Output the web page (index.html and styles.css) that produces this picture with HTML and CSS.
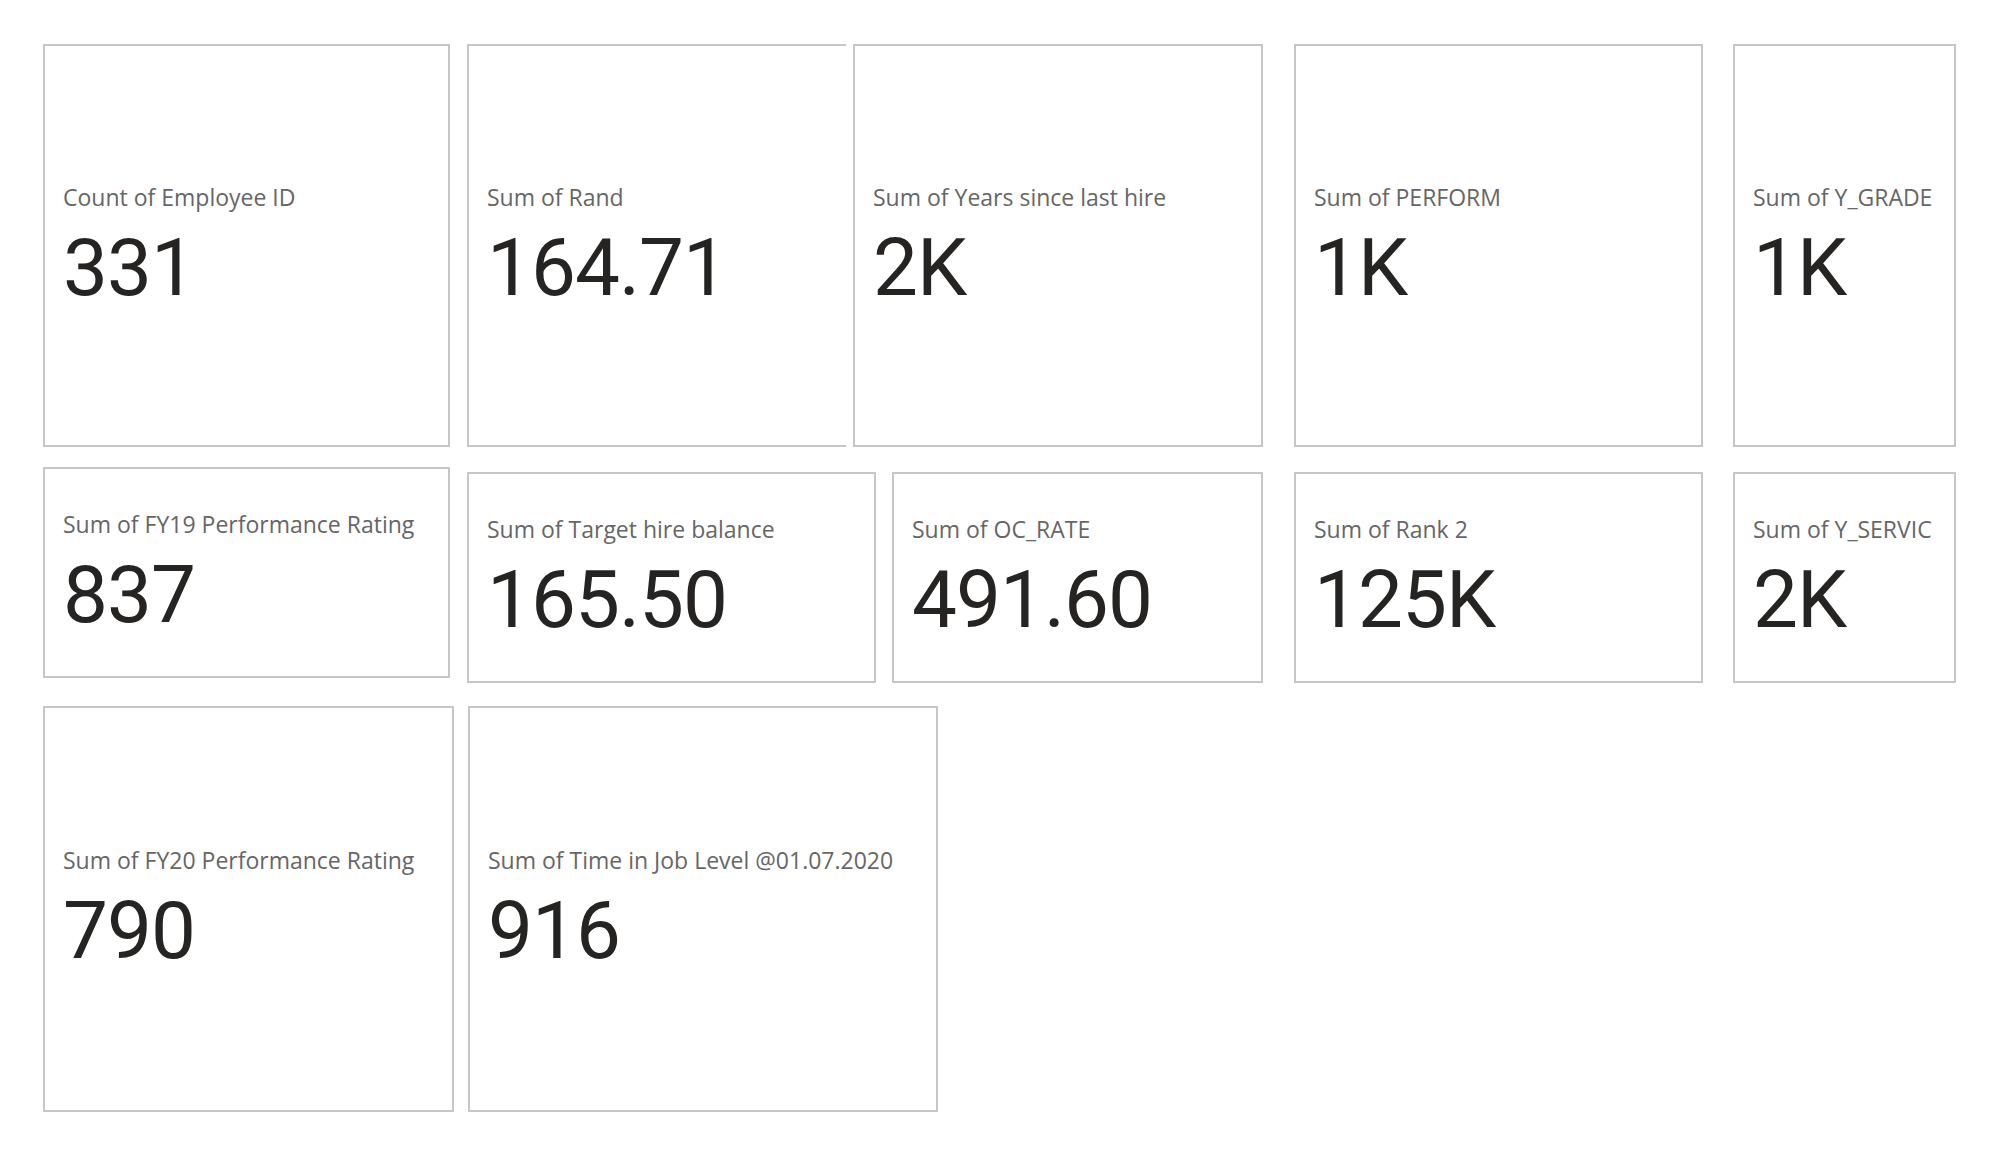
FILE: index.html
```html
<!DOCTYPE html>
<html lang="en">
<head>
<meta charset="utf-8">
<title>Cards</title>
<link rel="stylesheet" href="styles.css">
</head>
<body>
<div class="canvas">
  <div class="row row-1">
    <div class="card c1"><div class="label">Count of Employee ID</div><div class="value">331</div></div>
    <div class="card c2"><div class="label">Sum of Rand</div><div class="value">164.71</div></div>
    <div class="card c3"><div class="label">Sum of Years since last hire</div><div class="value">2K</div></div>
    <div class="card c4"><div class="label">Sum of PERFORM</div><div class="value">1K</div></div>
    <div class="card c5"><div class="label">Sum of Y_GRADE</div><div class="value">1K</div></div>
  </div>
  <div class="row row-2">
    <div class="card c6"><div class="label">Sum of FY19 Performance Rating</div><div class="value">837</div></div>
    <div class="card c7"><div class="label">Sum of Target hire balance</div><div class="value">165.50</div></div>
    <div class="card c8"><div class="label">Sum of OC_RATE</div><div class="value">491.60</div></div>
    <div class="card c9"><div class="label">Sum of Rank 2</div><div class="value">125K</div></div>
    <div class="card c10"><div class="label">Sum of Y_SERVIC</div><div class="value">2K</div></div>
  </div>
  <div class="row row-3">
    <div class="card c11"><div class="label">Sum of FY20 Performance Rating</div><div class="value">790</div></div>
    <div class="card c12"><div class="label">Sum of Time in Job Level @01.07.2020</div><div class="value">916</div></div>
  </div>
</div>
</body>
</html>
```
FILE: styles.css
```css
html, body {
  margin: 0;
  background: #ffffff;
}

.canvas {
  display: flex;
  flex-direction: column;
  padding: 44px 0 0 43px;
}

.row {
  display: flex;
  align-items: flex-start;
}

.row-2 { margin-top: 20px; }
.row-3 { margin-top: 23px; }

.card {
  box-sizing: border-box;
  border: 2px solid #c6c6c6;
  background: #ffffff;
  display: flex;
  flex-direction: column;
  justify-content: center;
  padding-left: 18px;
  overflow: hidden;
}

.label {
  font-family: "Open Sans", "Noto Sans", sans-serif;
  font-size: 23px;
  line-height: 27px;
  color: #666666;
  white-space: nowrap;
}

.value {
  font-family: Roboto, "DejaVu Sans", sans-serif;
  font-size: 80px;
  line-height: 80px;
  color: #252423;
  margin-top: 17px;
  letter-spacing: -1px;
  white-space: nowrap;
}

/* row 1 */
.c1 { width: 407px; height: 403px; }
.c2 { width: 379px; height: 403px; margin-left: 17px; border-right: none; }
.c3 { width: 410px; height: 403px; margin-left: 7px; }
.c4 { width: 409px; height: 403px; margin-left: 31px; }
.c5 { width: 223px; height: 403px; margin-left: 30px; }

/* row 2 */
.c6 { width: 407px; height: 211px; }
.c7 { width: 409px; height: 211px; margin-left: 17px; margin-top: 5px; }
.c8 { width: 371px; height: 211px; margin-left: 16px; margin-top: 5px; }
.c9 { width: 409px; height: 211px; margin-left: 31px; margin-top: 5px; }
.c10 { width: 223px; height: 211px; margin-left: 30px; margin-top: 5px; }

/* row 3 */
.c11 { width: 411px; height: 406px; }
.c12 { width: 470px; height: 406px; margin-left: 14px; }
```
